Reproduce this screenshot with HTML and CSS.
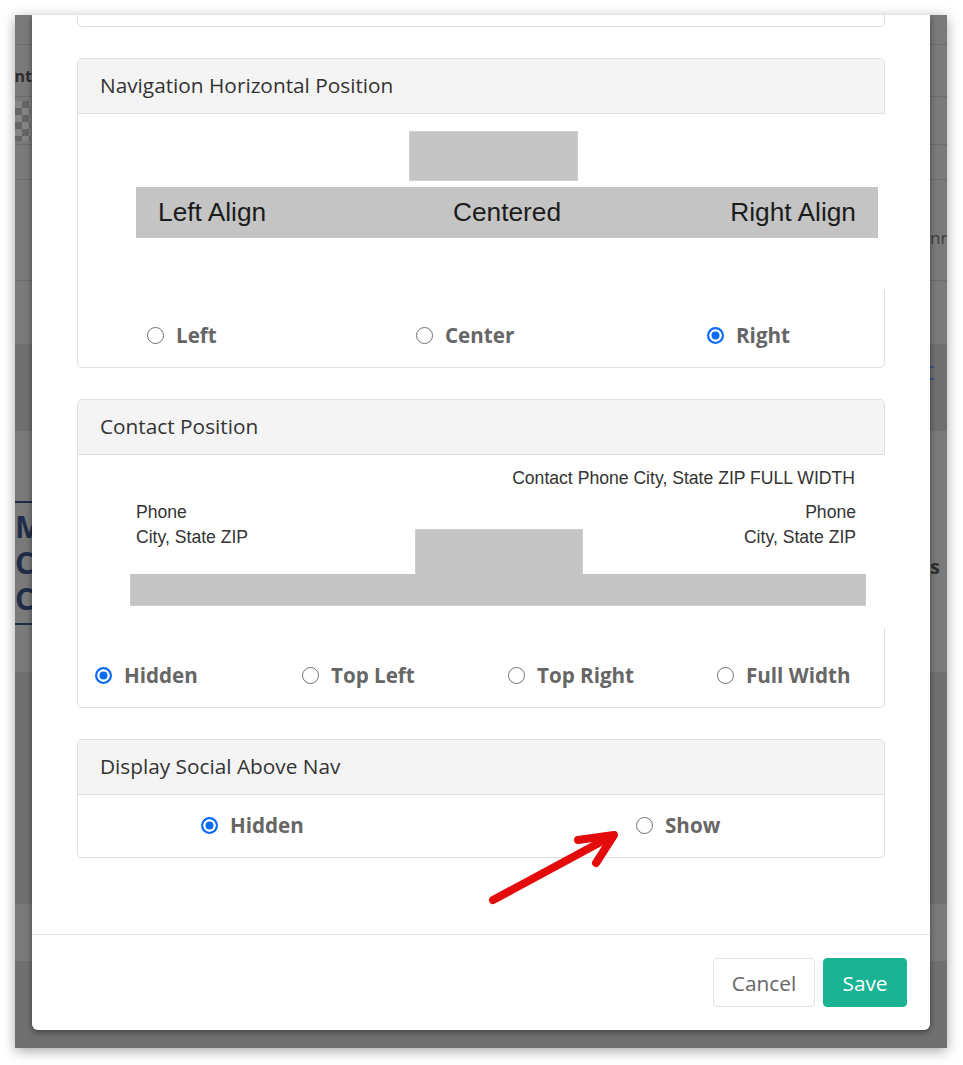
FILE: index.html
```html
<!DOCTYPE html>
<html lang="en">
<head>
<meta charset="utf-8">
<title>Header settings</title>
<link rel="stylesheet" href="styles.css">
</head>
<body>
<div class="frame">
  <div class="backdrop">
    <div class="band b1"></div>
    <div class="band b2"><div class="edge l t-ont"><span class="bgtxt">ont</span></div><div class="edge r"></div></div>
    <div class="band b3"><div class="edge l"><span class="checker"></span></div><div class="edge r"></div></div>
    <div class="band b4"></div>
    <div class="band b5"><div class="edge l"></div><div class="edge r t-nner"><span class="bgtxt light">nner</span></div></div>
    <div class="band b6"></div>
    <div class="band b7 dark"><div class="edge l"></div><div class="edge r"><span class="navymarks"></span></div></div>
    <div class="band b8"><div class="edge logo-edge"><div class="logo">Mo<br>CO<br>CH</div></div><div class="edge r t-s"><span class="bgtxt bold">s</span></div></div>
    <div class="band b9 dark"></div>
    <div class="band b10"></div>
    <div class="band b11 dark2"></div>
  </div>

  <div class="modal">
    <div class="modal-body">
      <div class="card-tail"></div>

      <section class="card">
        <div class="card-header">Navigation Horizontal Position</div>
        <div class="preview nav-preview">
          <div class="nav-box"></div>
          <div class="nav-bar"><span class="al">Left Align</span><span class="ac">Centered</span><span class="ar">Right Align</span></div>
        </div>
        <div class="options opts-nav">
          <label class="opt"><span class="radio"></span>Left</label>
          <label class="opt"><span class="radio"></span>Center</label>
          <label class="opt"><span class="radio on"></span>Right</label>
        </div>
      </section>

      <section class="card">
        <div class="card-header">Contact Position</div>
        <div class="preview contact-preview">
          <div class="full-line">Contact Phone City, State ZIP FULL WIDTH</div>
          <div class="contact-row">
            <div class="ctext">Phone<br>City, State ZIP</div>
            <div class="cbox"></div>
            <div class="ctext right">Phone<br>City, State ZIP</div>
          </div>
          <div class="cbar"></div>
        </div>
        <div class="options opts-contact">
          <label class="opt"><span class="radio on"></span>Hidden</label>
          <label class="opt"><span class="radio"></span>Top Left</label>
          <label class="opt"><span class="radio"></span>Top Right</label>
          <label class="opt"><span class="radio"></span>Full Width</label>
        </div>
      </section>

      <section class="card">
        <div class="card-header">Display Social Above Nav</div>
        <div class="options opts-social">
          <label class="opt"><span class="radio on"></span>Hidden</label>
          <label class="opt"><span class="radio"></span>Show</label>
        </div>
      </section>
    </div>
    <div class="modal-footer">
      <button class="btn btn-cancel">Cancel</button>
      <button class="btn btn-save">Save</button>
    </div>
  </div>
</div>

<svg class="arrow" width="140" height="90" viewBox="0 0 140 90">
  <g fill="none" stroke="#e30b0b" stroke-width="8" stroke-linecap="round" stroke-linejoin="round">
    <line x1="5" y1="82" x2="122" y2="19"/>
    <polyline points="90,22 126,17 108,45"/>
  </g>
</svg>
</body>
</html>
```

FILE: styles.css
```css
* { box-sizing: border-box; }
html, body { margin: 0; padding: 0; background: #ffffff; }
body { width: 963px; height: 1065px; position: relative; font-family: "Open Sans", "Liberation Sans", sans-serif; }

.frame {
  position: absolute;
  left: 15px; top: 15px;
  width: 932px; height: 1033px;
  display: grid;
  box-shadow: 0 3px 12px rgba(0,0,0,0.35);
  overflow: hidden;
  background: #7a7a7a;
}
.backdrop, .modal { grid-area: 1 / 1; }

.backdrop { display: flex; flex-direction: column; }
.band { display: flex; justify-content: space-between; background: #7a7a7a; border-bottom: 1px solid #6c6c6c; }
.band.dark { background: #6f6f6f; border-bottom: none; }
.band.dark2 { background: #707070; border-bottom: none; }
.b1 { height: 30px; }
.b2 { height: 52px; }
.b3 { height: 48px; }
.b4 { height: 35px; }
.b5 { height: 101px; }
.b6 { height: 63px; border-bottom: none; }
.b7 { height: 87px; }
.b8 { height: 241px; border-bottom: none; }
.b9 { height: 232px; }
.b10 { height: 57px; border-bottom: none; }
.b11 { flex: 1; }
.edge { width: 17px; overflow: hidden; display: flex; align-items: center; }
.edge.l { justify-content: flex-end; }
.edge.r { justify-content: flex-start; }
.edge.t-ont { padding-top: 10px; }
.edge.t-nner { padding-top: 15px; }
.edge.t-s { padding-top: 30px; }
.bgtxt { font-size: 16px; font-weight: 700; color: #2e2e2e; white-space: nowrap; }
.bgtxt.light { font-weight: 400; color: #3e3e3e; font-size: 17px; }
.bgtxt.bold { font-weight: 700; color: #2e2e2e; font-size: 20px; }
.checker {
  width: 15px; height: 40px; flex: none; margin-right: 2px;
  background: repeating-conic-gradient(#656565 0 25%, #858585 0 50%) 0 0 / 14px 14px;
}
.navymarks { width: 4px; height: 14px; border-top: 2px solid #3a5a8a; border-bottom: 2px solid #3a5a8a; margin-top: -30px; }
.edge.logo-edge { align-items: flex-start; justify-content: flex-start; padding-top: 70px; }
.logo {
  font-family: "Open Sans", sans-serif; font-weight: 700; font-size: 30px; line-height: 36px;
  color: #1f2d4a; border-top: 2px solid #1f2d4a; border-bottom: 2px solid #1f2d4a;
  padding: 6px 0; white-space: nowrap; width: 40px; flex: none;
}

.modal {
  margin-left: 17px;
  width: 898px;
  height: 1015px;
  background: #ffffff;
  border-radius: 0 0 6px 6px;
  box-shadow: 0 2px 6px rgba(0,0,0,0.45);
  display: flex;
  flex-direction: column;
  z-index: 1;
}
.modal-body { flex: 1; padding: 0 45px; }
.card-tail { height: 12px; border: 1px solid #dedede; border-top: none; border-radius: 0 0 5px 5px; margin-bottom: 31px; }

.card { border: 1px solid #dedede; border-radius: 5px; margin-bottom: 31px; }
.card-header {
  height: 55px; line-height: 52px;
  background: #f4f4f4;
  border-bottom: 1px solid #dedede;
  border-radius: 4px 4px 0 0;
  padding: 0 22px;
  font-size: 20.8px;
  color: #333333;
}
.preview { background: #ffffff; width: calc(100% + 1px); position: relative; font-family: "Liberation Sans", Arial, sans-serif; }

.nav-preview { height: 176px; padding-top: 17px; }
.nav-box { margin-left: 331px; width: 169px; height: 50px; background: #c4c4c4; border: 1px solid #cfcfcf; }
.nav-bar {
  margin-top: 6px; margin-left: 58px; width: 742px; height: 51px;
  background: #c4c4c4; display: grid; grid-template-columns: 1fr auto 1fr; align-items: center;
  padding: 0 22px; font-size: 26.3px; color: #1c1c1c;
}
.al { justify-self: start; }
.ac { justify-self: center; }
.ar { justify-self: end; }

.contact-preview { height: 173px; padding-top: 11px; font-size: 17.6px; color: #333333; }
.full-line { text-align: right; padding-right: 30px; line-height: 25px; }
.contact-row { margin-top: 9px; display: grid; grid-template-columns: 279px 168px 1fr; padding-left: 58px; padding-right: 29px; height: 74px; }
.ctext { line-height: 25px; white-space: nowrap; }
.ctext.right { text-align: right; }
.cbox { align-self: end; height: 45px; background: #c4c4c4; border: 1px solid #cdcdcd; border-bottom: none; }
.cbar { margin-left: 52px; width: 736px; height: 32px; background: #c4c4c4; border: 1px solid #cdcdcd; border-top: none; }

.options { display: grid; align-items: center; font-weight: 700; font-size: 20.6px; color: #666666; line-height: 28px; }
.opts-nav { padding: 31px 0 18px 69px; grid-template-columns: 269px 291px 1fr; }
.opts-contact { padding: 33px 0 18px 17px; grid-template-columns: 207px 206px 209px 1fr; }
.opts-social { padding: 16px 0 18px 123px; grid-template-columns: 435px 1fr; }
.opt { display: inline-flex; align-items: center; gap: 12px; }
.radio {
  width: 17px; height: 17px; border-radius: 50%;
  border: 1.5px solid #707070; background: #ffffff; flex: none;
}
.radio.on { border: 2px solid #0b6bf5; background: #0b6bf5; box-shadow: inset 0 0 0 2.5px #ffffff; }

.modal-footer {
  height: 96px;
  border-top: 1px solid #e4e4e4;
  display: flex; justify-content: flex-end; align-items: flex-start;
  gap: 8px;
  padding: 23px 23px 0 0;
}
.btn { height: 49px; border-radius: 4px; font-family: "Open Sans", sans-serif; font-size: 20.8px; padding: 0; }
.btn-cancel { width: 102px; background: #ffffff; border: 1px solid #e2e2e2; color: #666666; }
.btn-save { width: 84px; background: #1ab394; border: 1px solid #1ab394; color: #ffffff; }

.arrow { position: absolute; left: 488px; top: 818px; z-index: 5; }
```
